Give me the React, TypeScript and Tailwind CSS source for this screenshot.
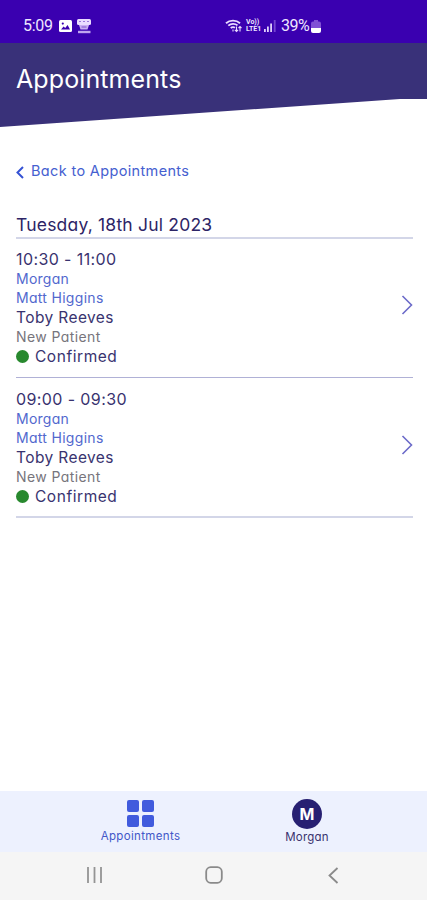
interface Appointment {
  time: string;
  organiser: string;
  clinician: string;
  patient: string;
  type: string;
  status: string;
}

const appointments: Appointment[] = [
  {
    time: "10:30 - 11:00",
    organiser: "Morgan",
    clinician: "Matt Higgins",
    patient: "Toby Reeves",
    type: "New Patient",
    status: "Confirmed",
  },
  {
    time: "09:00 - 09:30",
    organiser: "Morgan",
    clinician: "Matt Higgins",
    patient: "Toby Reeves",
    type: "New Patient",
    status: "Confirmed",
  },
];

function StatusBar() {
  return (
    <div className="h-[43px] bg-[#3a00b0] text-[#eee6ff] flex items-center pt-[9px] pl-[23px] font-[Roboto,sans-serif] text-[16px] leading-none">
      <span className="w-[36px] tracking-[-0.3px]">5:09</span>
      <svg className="w-[13px] h-[12px]" viewBox="0 0 13 12">
        <rect width="13" height="12" rx="1.5" fill="#fff" />
        <path d="M2 9.5 4.6 6.5 6.2 8 8.6 5 11 9.5z" fill="#3a00b0" />
        <circle cx="3.8" cy="3.6" r="1.1" fill="#3a00b0" />
      </svg>
      <svg className="w-[16px] h-[16px] ml-[4px]" viewBox="0 0 16 16">
        <rect x="1" y="1" width="14" height="6" rx="1.5" fill="#eadcff" />
        <path d="M3 3.5h2M7 3.5h2M11 3.5h2" stroke="#9a78dc" />
        <path d="M3 7h10l-1.500 4.500h-7z" fill="#c9aff2" />
        <path d="M5.5 9h5" stroke="#7d50cd" />
        <path d="M2 14h12.5" stroke="#bfa4ee" strokeWidth="2.4" />
      </svg>

      <svg className="w-[17px] h-[14px] ml-[133px]" viewBox="0 0 17 14" fill="none" stroke="#eadcff">
        <path d="M1 4.2C4.8.8 11.2.8 15 4.2" strokeWidth="1.9" />
        <path d="M3.3 6.7C6 4.3 10 4.3 12.5 6.4" strokeWidth="1.8" />
        <path d="M5.7 9C7.2 7.8 8.7 7.8 10 8.8" strokeWidth="1.8" />
        <path d="M8 10.5v2M11.5 7.5v5M9.8 10.8l1.7 1.7 1.6-1.7M15 12.5v-5M13.5 9 15 7.5 16.5 9" strokeWidth="1.1" />
      </svg>
      <div className="w-[17px] ml-[4px] text-[7px] leading-[7px] font-bold">
        <div className="h-[7px]">Vo))</div>
        <div className="h-[7px]">LTE1</div>
      </div>
      <svg className="w-[12px] h-[12px] ml-[1px]" viewBox="0 0 12 12" fill="#e0d0fb">
        <rect x="0" y="9" width="1.8" height="3" />
        <rect x="3" y="6.5" width="1.8" height="5.5" />
        <rect x="6.2" y="3.5" width="1.8" height="8.5" />
        <rect x="9.8" y="0" width="1.8" height="12" fill="#7544cf" />
      </svg>
      <span className="ml-[5px] w-[30px] tracking-[-0.5px]">39%</span>
      <svg className="w-[10px] h-[13px]" viewBox="0 0 10 13">
        <path d="M3 0h4v1.5h1a2 2 0 0 1 2 2V8H0V3.5a2 2 0 0 1 2-2h1z" fill="#8050d5" />
        <path d="M0 8h10v3a2 2 0 0 1-2 2H2a2 2 0 0 1-2-2z" fill="#fff" />
      </svg>
    </div>
  );
}

function AppointmentRow({ appointment }: { appointment: Appointment }) {
  return (
    <div className="h-[139px] last:h-[140px] pt-[10px] last:pt-[11px] border-b border-[#b0b1d6] last:border-b-2 last:border-[#d3d6e8] flex justify-between">
      <div className="text-[#39336f]">
        <div className="h-[20px] leading-[20px] text-[16px] tracking-[0.4px]">{appointment.time}</div>
        <div className="h-[19px] leading-[19px] text-[14px] tracking-[0.25px] text-[#5268ce]">{appointment.organiser}</div>
        <div className="h-[19px] leading-[19px] text-[14px] tracking-[0.3px] text-[#5268ce]">{appointment.clinician}</div>
        <div className="h-[20px] leading-[21px] text-[15.5px] tracking-[0.4px]">{appointment.patient}</div>
        <div className="h-[19px] leading-[19px] text-[14px] tracking-[0.4px] text-[#77757c]">{appointment.type}</div>
        <div className="h-[20px] leading-[21px] text-[15.5px] tracking-[0.55px] flex items-center gap-[6px]">
          <span className="w-[13px] h-[13px] rounded-full bg-[#28892e]" />
          {appointment.status}
        </div>
      </div>
      <svg className="w-[12px] h-[20px] mt-[46px]" viewBox="0 0 12 20" fill="none">
        <path d="M1.5 1 10.5 10 1.5 19" stroke="#6c6bc9" strokeWidth="1.6" />
      </svg>
    </div>
  );
}

export default function App() {
  return (
    <div className="w-[427px] h-[900px] bg-white flex flex-col overflow-hidden font-[Inter,sans-serif] [font-feature-settings:'cv11'] whitespace-nowrap">
      <StatusBar />

      {/* Header */}
      <header className="h-[84px] bg-[#393179] [clip-path:polygon(0_0,100%_0,100%_56px,400px_56px,0_100%)] pl-[16px] pt-[20px]">
        <h1 className="text-white text-[25px] leading-[32px] tracking-[0.1px]">Appointments</h1>
      </header>

      <main className="flex-1 pl-[16px] pr-[14px]">
        <a className="mt-[34px] h-[20px] flex items-center text-[#4560d0] text-[14.5px] tracking-[0.35px]">
          <svg className="w-[8px] h-[13px] mr-[7px] mt-[2px]" viewBox="0 0 8 13" fill="none">
            <path d="M7 1 1.5 6.5 7 12" stroke="#3552d4" strokeWidth="2" />
          </svg>
          Back to Appointments
        </a>
        <h2 className="mt-[33px] h-[25px] leading-[22px] border-b-2 border-[#d3d6e8] text-[#2d2466] text-[17.5px] tracking-[0.2px]">
          Tuesday, 18th Jul 2023
        </h2>
        {appointments.map((appointment) => (
          <AppointmentRow key={appointment.time} appointment={appointment} />
        ))}
      </main>

      {/* Tab bar */}
      <nav className="h-[61px] bg-[#edf1fe] flex text-[11.5px] leading-[14px]">
        <div className="w-[281px] flex flex-col items-center pt-[9px] text-[#4257c8]">
          <div className="grid grid-cols-2 gap-[3px]">
            <span className="w-[12px] h-[12px] rounded-[2px] bg-[#415bdd]" />
            <span className="w-[12px] h-[12px] rounded-[2px] bg-[#415bdd]" />
            <span className="w-[12px] h-[12px] rounded-[2px] bg-[#415bdd]" />
            <span className="w-[12px] h-[12px] rounded-[2px] bg-[#415bdd]" />
          </div>
          <span className="mt-[2px] tracking-[0.35px]">Appointments</span>
        </div>
        <div className="w-[52px] flex flex-col items-center pt-[8px] text-[#39336f]">
          <span className="w-[30px] h-[30px] rounded-full bg-[#272072] text-white text-[16px] font-bold leading-[31px] text-center">M</span>
          <span className="mt-px tracking-[0.2px]">Morgan</span>
        </div>
      </nav>

      {/* Android navigation */}
      <div className="h-[48px] bg-[#f5f5f5] flex items-center pl-[86px] pb-[2px]">
        <svg className="w-[17px] h-[16px]" viewBox="0 0 17 16" stroke="#949494" strokeWidth="1.8">
          <path d="M2 0v16M8.5 0v16M15 0v16" />
        </svg>
        <svg className="w-[18px] h-[18px] ml-[102px]" viewBox="0 0 18 18" fill="none">
          <rect x="1.2" y="1.2" width="15.6" height="15.6" rx="4.5" stroke="#8a8a8a" strokeWidth="1.8" />
        </svg>
        <svg className="w-[11px] h-[17px] ml-[105px]" viewBox="0 0 11 17" fill="none">
          <path d="M9.5 1 1.5 8.5 9.5 16" stroke="#8a8a8a" strokeWidth="1.8" />
        </svg>
      </div>
    </div>
  );
}
